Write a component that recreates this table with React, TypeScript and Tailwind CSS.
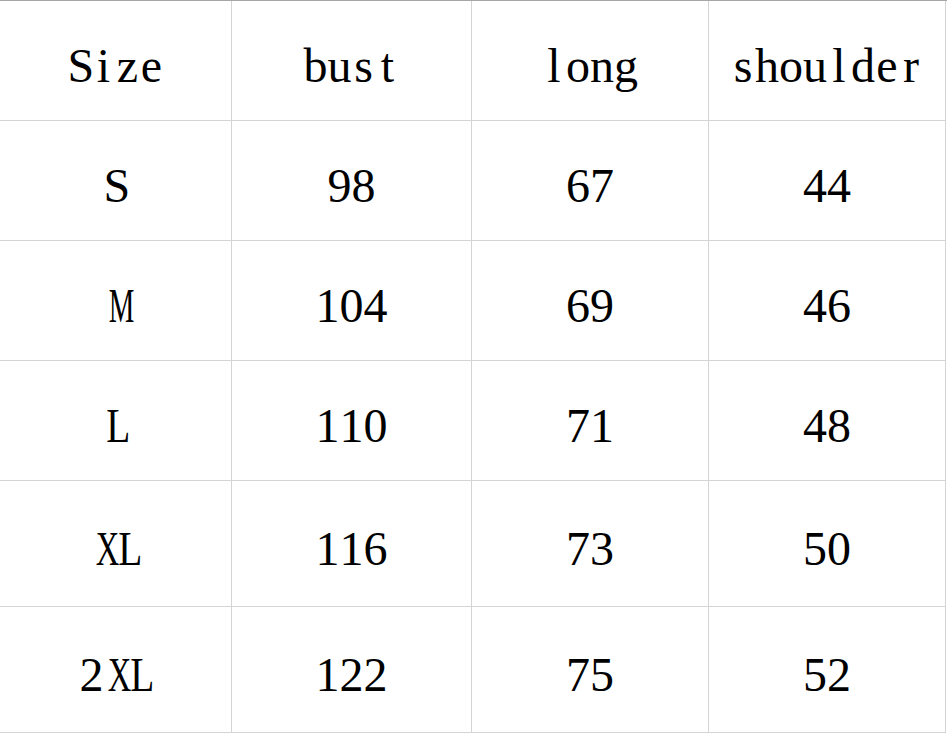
import React from "react";

const header = ["Size", "bust", "long", "shoulder"];
const rows = [
  ["S", "98", "67", "44"],
  ["M", "104", "69", "46"],
  ["L", "110", "71", "48"],
  ["XL", "116", "73", "50"],
  ["2XL", "122", "75", "52"],
];

function Glyph({ ch }: { ch: string }) {
  let cls = "inline-block w-[24px] text-center";
  if (ch === "M") cls += " scale-x-[0.6]";
  else if (ch === "X") cls += " scale-x-[0.68]";
  else if (ch === "L") cls += " scale-x-[0.82]";
  return <span className={cls}>{ch}</span>;
}

function Mono({ text }: { text: string }) {
  return (
    <span className="whitespace-nowrap">
      {text.split("").map((c, i) => (
        <Glyph key={i} ch={c} />
      ))}
    </span>
  );
}

function Cell({ text, tall }: { text: string; tall?: boolean }) {
  return (
    <div
      className={
        "flex items-center justify-center border-r border-b border-[#d4d4d4] pt-[10px] " +
        (tall ? "h-[126px]" : "h-[120px]")
      }
    >
      <Mono text={text} />
    </div>
  );
}

export default function App() {
  return (
    <div className="w-[947px] h-[735px] bg-white overflow-hidden font-['Liberation_Serif','Times_New_Roman',serif]">
      <div className="grid grid-cols-[232px_240px_237px_237px] border-t border-[#a6a6a6] text-black text-[48px] leading-[1.15] font-['Liberation_Serif','Times_New_Roman',serif]">
        {header.map((h, i) => (
          <Cell key={"h" + i} text={h} />
        ))}
        {rows.map((r, ri) =>
          r.map((v, ci) => <Cell key={ri + "-" + ci} text={v} tall={ri >= 3} />)
        )}
      </div>
    </div>
  );
}
